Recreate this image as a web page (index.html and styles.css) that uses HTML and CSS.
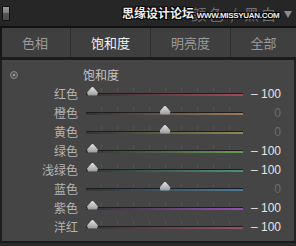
FILE: index.html
```html
<!DOCTYPE html>
<html lang="zh-CN">
<head>
    <meta charset="UTF-8">
    <meta name="viewport" content="width=device-width, initial-scale=1.0">
    <title>饱和度</title>
    <link rel="stylesheet" href="styles.css">
</head>
<body>
    <!-- Cabeçalho do painel -->
    <div class="topo">
        <span class="alternar"></span>
        <span class="titulo">颜色 / 黑白</span>
        <span class="seta"></span>
        <span class="marca">思缘设计论坛 <small>WWW.MISSYUAN.COM</small></span>
    </div>

    <!-- Abas -->
    <div class="abas">
        <div class="aba">色相</div>
        <div class="aba ativa">饱和度</div>
        <div class="aba">明亮度</div>
        <div class="aba">全部</div>
    </div>

    <!-- Sliders -->
    <div class="painel">
        <div class="painel-topo">
            <span class="alvo"></span>
            <span class="painel-titulo">饱和度</span>
        </div>

        <div class="linha">
            <span class="rotulo">红色</span>
            <div class="trilha vermelho"><span class="botao" style="left: 0%"></span></div>
            <span class="valor">– 100</span>
        </div>
        <div class="linha">
            <span class="rotulo">橙色</span>
            <div class="trilha laranja"><span class="botao meio" style="left: 50%"></span></div>
            <span class="valor zero">0</span>
        </div>
        <div class="linha">
            <span class="rotulo">黄色</span>
            <div class="trilha amarelo"><span class="botao meio" style="left: 50%"></span></div>
            <span class="valor zero">0</span>
        </div>
        <div class="linha">
            <span class="rotulo">绿色</span>
            <div class="trilha verde"><span class="botao" style="left: 0%"></span></div>
            <span class="valor">– 100</span>
        </div>
        <div class="linha">
            <span class="rotulo">浅绿色</span>
            <div class="trilha ciano"><span class="botao" style="left: 0%"></span></div>
            <span class="valor">– 100</span>
        </div>
        <div class="linha">
            <span class="rotulo">蓝色</span>
            <div class="trilha azul"><span class="botao meio" style="left: 50%"></span></div>
            <span class="valor zero">0</span>
        </div>
        <div class="linha">
            <span class="rotulo">紫色</span>
            <div class="trilha roxo"><span class="botao" style="left: 0%"></span></div>
            <span class="valor">– 100</span>
        </div>
        <div class="linha">
            <span class="rotulo">洋红</span>
            <div class="trilha magenta"><span class="botao" style="left: 0%"></span></div>
            <span class="valor">– 100</span>
        </div>
    </div>
</body>
</html>
```

FILE: styles.css
```css
/* Estilos globais */
body {
    margin: 0;
    width: 296px;
    height: 246px;
    overflow: hidden;
    font-family: "Noto Sans CJK SC", "Liberation Sans", sans-serif;
    background-color: #2a2a2a;
}

/* Cabeçalho */
.topo {
    position: relative;
    display: flex;
    align-items: center;
    height: 26px;
    background-color: #262626;
    border-bottom: 2px solid #121212;
}

.alternar {
    width: 6px;
    height: 13px;
    margin-left: 2px;
    border: 1px solid #111;
    background: linear-gradient(#9a9a9a, #777 50%, #555 50%, #4a4a4a);
}

.titulo {
    margin-left: auto;
    font-size: 15px;
    color: #6e6e6e;
    letter-spacing: 2px;
}

.seta {
    width: 0;
    height: 0;
    margin: 2px 4px 0 6px;
    border-left: 4px solid transparent;
    border-right: 4px solid transparent;
    border-top: 7px solid #8a8a8a;
}

/* Marca d'água por cima do título */
.marca {
    position: absolute;
    left: 122px;
    top: 6px;
    font-size: 12px;
    line-height: 14px;
    font-weight: bold;
    color: #eee;
    text-shadow: 1px 1px 0 #000, -1px -1px 0 #000, 1px -1px 0 #000, -1px 1px 0 #000;
    white-space: nowrap;
}

.marca small {
    font-family: "Liberation Sans", sans-serif;
    font-size: 8px;
    letter-spacing: -0.3px;
}

/* Abas */
.abas {
    display: grid;
    grid-template-columns: 68px 80px 80px 1fr;
    height: 29px;
    background-color: #3f3f3f;
    border-left: 2px solid #161616;
    border-bottom: 3px solid #1c1c1c;
}

.aba {
    display: flex;
    align-items: center;
    justify-content: center;
    font-size: 13px;
    color: #9a9a9a;
    border-left: 1px solid #2c2c2c;
}

.aba:first-child {
    border-left: none;
    margin-left: -2px;
}

.aba.ativa {
    color: #f2f2f2;
}

/* Painel */
.painel {
    height: 181px;
    background-color: #454545;
    border-left: 2px solid #1e1e1e;
    border-right: 2px solid #222;
    border-bottom: 2px solid #1a1a1a;
}

.painel-topo {
    position: relative;
    height: 24px;
}

.alvo {
    position: absolute;
    left: 8px;
    top: 11px;
    width: 6px;
    height: 6px;
    border: 1px solid #8a8a8a;
    border-radius: 50%;
    background: radial-gradient(#999 0 1px, #555 1.5px);
}

.painel-titulo {
    position: absolute;
    left: 81px;
    top: 8px;
    font-size: 12px;
    line-height: 14px;
    color: #c4c4c4;
}

.linha {
    display: grid;
    grid-template-columns: 84px 157px 1fr;
    align-items: center;
    height: 19px;
}

.rotulo {
    text-align: right;
    padding-right: 8px;
    font-size: 12px;
    color: #b4b4b4;
}

.trilha {
    position: relative;
    height: 2px;
    margin-top: 1px;
    border-top: 1px solid #1e1e1e;
}

/* marcas de escala sobre a trilha */
.trilha::before {
    content: "";
    position: absolute;
    left: 0;
    right: 0;
    top: -6px;
    height: 4px;
    background: repeating-linear-gradient(to right, transparent 0 15px, #525252 15px 16px);
}

.vermelho { background: linear-gradient(to right, #333, #a04a58); }
.laranja { background: linear-gradient(to right, #333, #9c7a5c); }
.amarelo { background: linear-gradient(to right, #333, #8e8a52); }
.verde { background: linear-gradient(to right, #333, #679c58); }
.ciano { background: linear-gradient(to right, #333, #4a9478); }
.azul { background: linear-gradient(to right, #333, #4a7a98); }
.roxo { background: linear-gradient(to right, #333, #9450b4); }
.magenta { background: linear-gradient(to right, #333, #94506e); }

.botao {
    position: absolute;
    top: -7px;
    width: 11px;
    height: 9px;
    margin-left: 1px;
    background: linear-gradient(#e4e4e4, #969696);
    clip-path: polygon(50% 0, 80% 40%, 100% 70%, 90% 100%, 10% 100%, 0 70%, 20% 40%);
}

.botao.meio {
    margin-left: -5px;
}

.valor {
    text-align: right;
    padding-right: 13px;
    font-family: "Liberation Sans", sans-serif;
    font-size: 12px;
    color: #e4e4e4;
}

.valor.zero {
    color: #6c6c6c;
}
```
